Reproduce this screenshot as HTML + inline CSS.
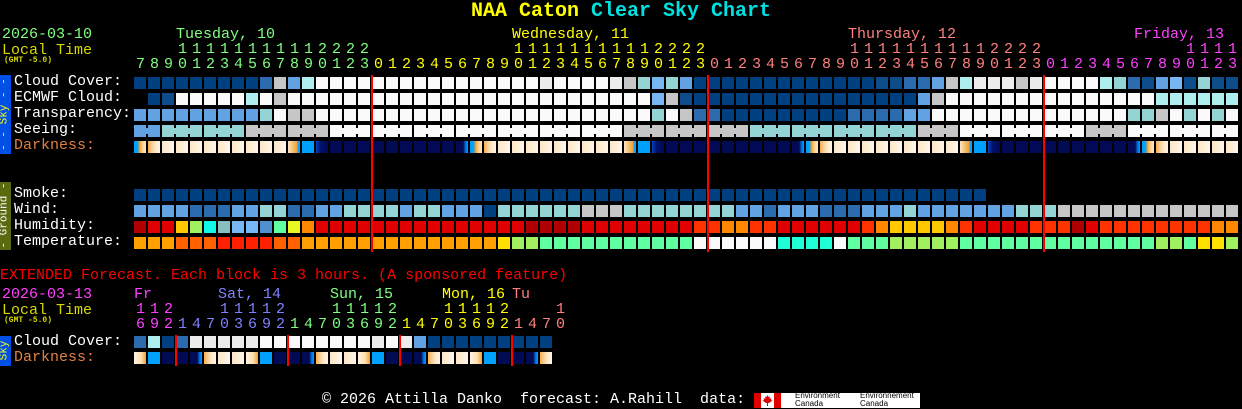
<!DOCTYPE html>
<html><head><meta charset="utf-8">
<style>
body{margin:0;background:#000;width:1242px;height:408px;overflow:hidden;position:relative;font-family:"Liberation Mono",monospace;}
.t{position:absolute;white-space:pre;font-size:15px;line-height:18px;}
.b{position:absolute;width:12px;height:12px;}
.red{position:absolute;width:2px;background:#f00;}
.tab{position:absolute;left:0;width:11px;}
.vt{position:absolute;transform:rotate(-90deg);transform-origin:center;white-space:pre;font-size:11px;line-height:11px;}
</style></head><body>
<div class="t" style="left:0;width:1242px;top:0;text-align:center;font-size:20px;line-height:24px;font-weight:bold"><span style="color:#ffff00">NAA Caton</span> <span style="color:#00e0e0">Clear Sky Chart</span></div>
<div class="t" style="left:2px;top:26px;color:#80ff80">2026-03-10</div>
<div class="t" style="left:2px;top:42px;color:#d8d800">Local Time</div>
<div class="t" style="left:4px;top:56px;color:#d8d800;font-size:8px;line-height:9px;font-weight:bold">(GMT -5.0)</div>
<div class="t" style="left:176px;top:26px;color:#80ff80">Tuesday, 10</div>
<div class="t" style="left:512px;top:26px;color:#ffff00">Wednesday, 11</div>
<div class="t" style="left:848px;top:26px;color:#ff8080">Thursday, 12</div>
<div class="t" style="left:1134px;top:26px;color:#ff40ff">Friday, 13</div>

<div class="t" style="left:14px;top:73px;color:#fff">Cloud Cover:</div>
<div class="t" style="left:14px;top:89px;color:#fff">ECMWF Cloud:</div>
<div class="t" style="left:14px;top:105px;color:#fff">Transparency:</div>
<div class="t" style="left:14px;top:121px;color:#fff">Seeing:</div>
<div class="t" style="left:14px;top:137px;color:#e08040">Darkness:</div>
<div class="t" style="left:14px;top:185px;color:#fff">Smoke:</div>
<div class="t" style="left:14px;top:201px;color:#fff">Wind:</div>
<div class="t" style="left:14px;top:217px;color:#fff">Humidity:</div>
<div class="t" style="left:14px;top:233px;color:#fff">Temperature:</div>

<div class="tab" style="top:75px;height:79px;background:#0050e8"></div>
<div class="vt" style="left:-34px;top:109px;width:78px;height:11px;text-align:center;color:#ffff00">- - Sky - -</div>
<div class="tab" style="top:182px;height:68px;background:#5a6a10"></div>
<div class="vt" style="left:-29px;top:210px;width:68px;height:11px;text-align:center;color:#fff">- Ground -</div>

<div class="t" style="left:0;top:267px;color:#ff0000">EXTENDED Forecast. Each block is 3 hours. (A sponsored feature)</div>
<div class="t" style="left:2px;top:286px;color:#ff40ff">2026-03-13</div>
<div class="t" style="left:2px;top:302px;color:#d8d800">Local Time</div>
<div class="t" style="left:4px;top:316px;color:#d8d800;font-size:8px;line-height:9px;font-weight:bold">(GMT -5.0)</div>
<div class="t" style="left:134px;top:286px;color:#ff40ff">Fr</div>
<div class="t" style="left:218px;top:286px;color:#8080ff">Sat, 14</div>
<div class="t" style="left:330px;top:286px;color:#80ff80">Sun, 15</div>
<div class="t" style="left:442px;top:286px;color:#ffff00">Mon, 16</div>
<div class="t" style="left:512px;top:286px;color:#ff8080">Tu</div>
<div class="t" style="left:14px;top:333px;color:#fff">Cloud Cover:</div>
<div class="t" style="left:14px;top:349px;color:#e08040">Darkness:</div>
<div class="tab" style="top:336px;height:30px;background:#0050e8"></div>
<div class="vt" style="left:-10px;top:345px;width:30px;height:11px;text-align:center;color:#ffff00">Sky</div>

<div class="t" style="left:322px;top:391px;color:#fff">© 2026 Attilla Danko  forecast: A.Rahill  data:</div>
<div style="position:absolute;left:754px;top:393px;width:166px;height:15px;background:#fff"></div>
<div style="position:absolute;left:754px;top:393px;width:7px;height:15px;background:#e00000"></div>
<div style="position:absolute;left:774px;top:393px;width:7px;height:15px;background:#e00000"></div>
<svg style="position:absolute;left:761px;top:394px" width="13" height="13" viewBox="0 0 13 13"><path d="M6.5 1 L7.5 3 L9 2.5 L8.5 5 L10.5 4 L10 6 L11.5 6.5 L8 9 L7 9 L7 12 L6 12 L6 9 L5 9 L1.5 6.5 L3 6 L2.5 4 L4.5 5 L4 2.5 L5.5 3 Z" fill="#e00000"/></svg>
<div class="t" style="left:795px;top:392px;color:#000;font-family:'Liberation Sans',sans-serif;font-size:8px;line-height:8px">Environment<br>Canada</div>
<div class="t" style="left:860px;top:392px;color:#000;font-family:'Liberation Sans',sans-serif;font-size:8px;line-height:8px">Environnement<br>Canada</div>

<div id="g"></div>
<script>
var P={A:'#003f80',B:'#0e4c8c',C:'#2c6cae',L:'#62a2e2',S:'#76b6f2',T:'#94d4d4',P:'#aeeeee',Y:'#c6c6c6',E:'#ececec',W:'#fafafa',
R:'#e00000',D:'#b00000',F:'#ff3300',O:'#ff8800',G:'#ffc800',l:'#a0f060',c:'#10f8e8',g:'#88c0c0',m:'#5090d0',e:'#60ffa0',y:'#e8f820',
o:'#ffa000',h:'#ff6000',x:'#ff2000',j:'#ffe000',q:'#20ffd8'};
var DK={n:'#020a55',c:'linear-gradient(90deg,#fde6c4,#fff6ec)',o:'linear-gradient(90deg,#f4b050,#ffe8c8 60%,#fff4e6)',
co:'linear-gradient(90deg,#fff2e0,#fde0b0 60%,#f0a030)',so:'linear-gradient(90deg,#fde4c0,#f0a030 75%,#10a0ff 85%)',
b:'#00a0ff',k:'linear-gradient(90deg,#0040c0,#00106a 40%,#020a55)',nb:'linear-gradient(90deg,#020a55 60%,#0070e0 80%,#00a0ff)',
r:'linear-gradient(90deg,#00a0ff 30%,#f0a020 45%,#ffd090 70%,#ffe8c8)'};
function ex(s){var r=[];s.split(',').forEach(function(t){var c=t[0],n=t.length>1?parseInt(t.slice(1)):1;for(var i=0;i<n;i++)r.push(c);});return r;}
var h='',X0=134;
function blk(x,y,bg,w){h+='<div class="b" style="left:'+x+'px;top:'+y+'px;background:'+bg+(w?';width:'+w+'px':'')+'"></div>';}
function row(y,s,x0){ex(s).forEach(function(c,i){if(c!='_')blk((x0||X0)+14*i,y,P[c]);});}
row(77,'A9,C,Y,L,P,W16,E,W4,E,Y,T,S,T,L,A13,B,B,C,C,L,Y,P,E3,Y,E,W4,P,T,C,B,L,S,B,T,B,B');
row(93,'_,A,B,W5,P,W,Y,W26,S,Y,B,A16,L,Y,W15,P6');
row(109,'L9,T,W,Y2,W24,T,W,Y,C2,A9,C4,L2,W14,T2,Y,W,T,W,T,W');
var see=ex('L2,T6,Y6,W21,Y9,T12,Y3,W9,Y3,W8');
see.forEach(function(c,i){blk(X0+14*i,125,P[c]);if(i<78&&Math.floor((i+1)/3)==Math.floor((i+2)/3)){h+='<div class="b" style="left:'+(X0+14*i+12)+'px;top:128px;width:2px;height:6px;background:'+P[c]+'"></div>';}});
for(var i=0;i<79;i++){var m=((i%24)+24)%24,k='n';
 if(m==23)k='nb';else if(m==0)k='r';else if(m==1)k='o';else if(m>=2&&m<=10)k='c';else if(m==11)k='so';else if(m==12)k='b';else if(m==13)k='k';
 blk(X0+14*i,141,DK[k]);}
row(189,'A61');
row(205,'L4,C3,L2,T2,C2,L2,T4,L,T2,L3,A,T6,Y3,T8,L2,C,L3,C3,L3,T,L7,T3,Y13');
row(221,'D,R2,G,l,c,g,S2,m,e,y,O,R15,D4,R8,F2,O2,F2,R6,F,O,G4,O,F,R4,F3,D,R,F8,O2');
row(237,'o3,h3,x4,h2,o14,j,l2,e11,W6,q4,W,e3,l5,e14,l2,e,j2,l');
row(336,'C,P,A,C,E5,W8,E,W,E,L,A9');
var ep=['co','b','n','n','nb','o','c','c'];
for(var i=0;i<30;i++)blk(X0+14*i,352,DK[ep[i%8]]);
[371,707,1043].forEach(function(x){h+='<div class="red" style="left:'+x+'px;top:75px;height:177px"></div>';});
[175,287,399,511].forEach(function(x){h+='<div class="red" style="left:'+x+'px;top:335px;height:31px"></div>';});
function txt(x,y,s,c){h+='<div class="t" style="left:'+x+'px;top:'+y+'px;color:'+c+'">'+s+'</div>';}
for(var i=0;i<79;i++){var hr=(7+i)%24,c=i<17?'#80ff80':i<41?'#ffff00':i<65?'#ff8080':'#ff40ff';
 txt(X0+14*i+2,56,String(hr%10),c);if(hr>=10)txt(X0+14*i+2,41,String(Math.floor(hr/10)),c);}
for(var i=0;i<31;i++){var hr=(16+3*i)%24,c=i<3?'#ff40ff':i<11?'#8080ff':i<19?'#80ff80':i<27?'#ffff00':'#ff8080';
 txt(X0+14*i+2,316,String(hr%10),c);if(hr>=10)txt(X0+14*i+2,301,String(Math.floor(hr/10)),c);}
document.getElementById('g').innerHTML=h;
</script>
</body></html>
